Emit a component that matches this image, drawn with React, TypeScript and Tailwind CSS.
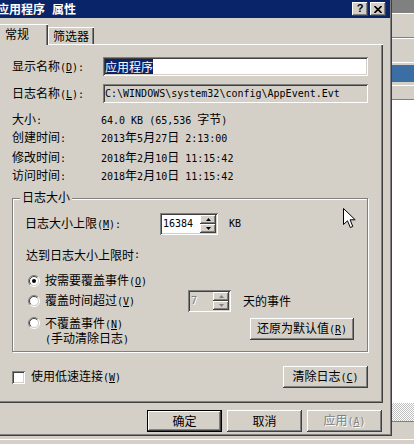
import React from "react";

const mono = "whitespace-pre font-['DejaVu_Sans_Mono',monospace] text-[10px]";
const raised = "bg-[#d4d0c8] shadow-[inset_-1px_-1px_#404040,inset_1px_1px_#ffffff,inset_-2px_-2px_#808080]";
const sunken = "shadow-[inset_1px_1px_#808080,inset_-1px_-1px_#ffffff,inset_2px_2px_#404040,inset_-2px_-2px_#d4d0c8]";

// mixed text: CJK at 12px, ascii in a 6px-wide mono, "&X" = access key
function M({ t }: { t: string }) {
  const out: React.ReactNode[] = [];
  t.split(/(&.)/).forEach((seg, i) => {
    if (!seg) return;
    if (seg[0] === "&" && seg.length === 2) {
      out.push(<span key={i} className={mono + " underline"}>{seg[1]}</span>);
      return;
    }
    seg.split(/([\x20-\x7e]+)/).forEach((p, j) => {
      if (!p) return;
      out.push(
        /[\x20-\x7e]/.test(p[0]) ? (
          <span key={i + "-" + j} className={mono}>{p}</span>
        ) : (
          <span key={i + "-" + j}>{p}</span>
        )
      );
    });
  });
  return <>{out}</>;
}

function Btn({ t, className, def, disabled }: { t: string; className: string; def?: boolean; disabled?: boolean }) {
  const frame = def
    ? "bg-[#d4d0c8] shadow-[inset_0_0_0_1px_#000000,inset_-2px_-2px_#404040,inset_2px_2px_#ffffff,inset_-3px_-3px_#808080]"
    : raised;
  return (
    <div
      className={`flex items-center justify-center ${frame} ${className} ${
        disabled ? "text-[#808080] [text-shadow:1px_1px_#ffffff]" : ""
      }`}
    >
      <span>
        <M t={t} />
      </span>
    </div>
  );
}

function Radio({ checked }: { checked?: boolean }) {
  return (
    <svg width="12" height="12" viewBox="0 0 12 12" className="shrink-0">
      <circle cx="6" cy="6" r="4.5" fill="#ffffff" />
      <path d="M2.1 9.9 A5.5 5.5 0 0 1 9.9 2.1" fill="none" stroke="#808080" />
      <path d="M9.9 2.1 A5.5 5.5 0 0 1 2.1 9.9" fill="none" stroke="#ffffff" />
      <path d="M2.8 9.2 A4.5 4.5 0 0 1 9.2 2.8" fill="none" stroke="#404040" />
      <path d="M9.2 2.8 A4.5 4.5 0 0 1 2.8 9.2" fill="none" stroke="#d4d0c8" />
      {checked && <circle cx="6" cy="6" r="2" fill="#000000" />}
    </svg>
  );
}

function SpinArrows({ disabled }: { disabled?: boolean }) {
  const c = disabled ? "#808080" : "#000000";
  return (
    <div className="flex flex-col w-[16px] shrink-0">
      <div className={`h-[9px] flex items-center justify-center ${raised}`}>
        <svg width="5" height="3" viewBox="0 0 5 3">
          <path d="M2.5 0 L5 3 L0 3 Z" fill={c} />
        </svg>
      </div>
      <div className={`h-[9px] flex items-center justify-center ${raised}`}>
        <svg width="5" height="3" viewBox="0 0 5 3">
          <path d="M0 0 L5 0 L2.5 3 Z" fill={c} />
        </svg>
      </div>
    </div>
  );
}

function Stat({ label, value, className = "" }: { label: string; value: string; className?: string }) {
  return (
    <div className={`flex items-center h-[18px] ${className}`}>
      <div className="w-[89px]">
        <M t={label} />
      </div>
      <div>
        <M t={value} />
      </div>
    </div>
  );
}

function Dialog() {
  return (
    <div className="w-[392px] h-[436px] flex flex-col shadow-[inset_-1px_-1px_#404040,inset_-2px_-2px_#808080]">
      {/* title bar */}
      <div className="h-[18px] w-[390px] bg-[#0a246a] flex items-center">
        <span className="ml-[-3px] text-white font-bold text-[12px] leading-[14px]">应用程序</span>
        <span className="w-[7px]" />
        <span className="text-white font-bold text-[12px] leading-[14px]">属性</span>
        <div className="ml-auto flex gap-[2px] pr-[4px]">
          <div className={`w-[16px] h-[14px] flex items-center justify-center ${raised}`}>
            <span className="font-['Liberation_Sans',sans-serif] font-bold text-[11px] leading-[11px] mt-[-1px]">?</span>
          </div>
          <div className={`w-[16px] h-[14px] flex items-center justify-center ${raised}`}>
            <svg width="8" height="7" viewBox="0 0 8 7">
              <path d="M0.5 0 L7.5 7 M7.5 0 L0.5 7" stroke="#000000" strokeWidth="1.6" />
            </svg>
          </div>
        </div>
      </div>

      {/* tabs */}
      <div className="flex items-end h-[20px] mt-[6px]">
        <div className="relative z-10 w-[48px] h-[21px] mb-[-1px] bg-[#d4d0c8] shadow-[inset_0_1px_#ffffff,inset_-1px_0_#404040,inset_-2px_0_#808080] pl-[5px] pt-[3px]">
          常规
        </div>
        <div className="w-[46px] h-[17px] bg-[#d4d0c8] shadow-[inset_1px_1px_#ffffff,inset_-1px_0_#404040,inset_-2px_0_#808080] flex justify-center pt-[2px]">
          筛选器
        </div>
      </div>

      {/* panel */}
      <div className="w-[383px] h-[359px] shadow-[inset_0_1px_#ffffff,inset_-1px_-1px_#404040,inset_-2px_-2px_#808080] flex flex-col pl-[12px]">
        <div className="flex items-center h-[19px] mt-[13px]">
          <div className="w-[91px]">
            <M t="显示名称(&D):" />
          </div>
          <div className={`w-[265px] h-[19px] bg-white ${sunken} flex items-center pl-[2px]`}>
            <span className="bg-[#0a246a] text-white h-[15px] flex items-center">应用程序</span>
          </div>
        </div>
        <div className="flex items-center h-[19px] mt-[8px]">
          <div className="w-[91px]">
            <M t="日志名称(&L):" />
          </div>
          <div className={`w-[265px] h-[19px] ${sunken} flex items-center pl-[2px]`}>
            <span className={mono}>{"C:\\WINDOWS\\system32\\config\\AppEvent.Evt"}</span>
          </div>
        </div>

        <Stat className="mt-[8px]" label="大小:" value="64.0 KB (65,536 字节)" />
        <Stat label="创建时间:" value="2013年5月27日 2:13:00" />
        <Stat className="mt-[2px]" label="修改时间:" value="2018年2月10日 11:15:42" />
        <Stat label="访问时间:" value="2018年2月10日 11:15:42" />

        {/* group box */}
        <div className="relative mt-[13px] w-[356px] h-[154px] border border-[#808080] shadow-[inset_1px_1px_#ffffff,1px_1px_#ffffff] pl-[12px] pt-[14px] flex flex-col">
          <span className="absolute left-[7px] top-[-9px] px-[2px] bg-[#d4d0c8] leading-[14px]">日志大小</span>
          <svg className="absolute left-[330px] top-[9px]" width="13" height="21" viewBox="0 0 13 21">
            <path d="M0.5 0.5 L0.5 16.5 L4.5 12.8 L7.3 19.5 L9.8 18.5 L7.1 11.8 L12.2 11.8 Z" fill="#ffffff" stroke="#000000" />
          </svg>

          <div className="flex items-center h-[22px]">
            <div className="w-[135px]">
              <M t="日志大小上限(&M):" />
            </div>
            <div className={`w-[58px] h-[22px] bg-white ${sunken} flex p-[2px]`}>
              <div className="flex-1 flex items-center pl-[1px]">
                <span className={mono}>16384</span>
              </div>
              <SpinArrows />
            </div>
            <span className={`ml-[11px] ${mono}`}>KB</span>
          </div>

          <div className="h-[14px] mt-[13px] pl-[1px] flex items-center">
            <M t="达到日志大小上限时:" />
          </div>

          <div className="flex items-center h-[16px] mt-[11px] pl-[3px]">
            <Radio checked />
            <span className="ml-[5px]">
              <M t="按需要覆盖事件(&O)" />
            </span>
          </div>

          <div className="flex items-center h-[22px] mt-[1px] pl-[3px]">
            <div className="w-[160px] flex items-center">
              <Radio />
              <span className="ml-[5px]">
                <M t="覆盖时间超过(&V)" />
              </span>
            </div>
            <div className={`w-[43px] h-[22px] bg-[#d4d0c8] ${sunken} flex p-[2px]`}>
              <div className="flex-1 flex items-center pl-[1px]">
                <span className={`${mono} text-[#808080] [text-shadow:1px_1px_#ffffff]`}>7</span>
              </div>
              <SpinArrows disabled />
            </div>
            <span className="ml-[12px]">天的事件</span>
          </div>

          <div className="flex items-start mt-[4px] pl-[3px]">
            <div className="w-[222px] flex items-start">
              <div className="mt-[1px]">
                <Radio />
              </div>
              <div className="ml-[5px] leading-[13px] flex flex-col">
                <span>
                  <M t="不覆盖事件(&N)" />
                </span>
                <span>
                  <M t="(手动清除日志)" />
                </span>
              </div>
            </div>
            <Btn className="w-[104px] h-[22px] mt-[2px]" t="还原为默认值(&R)" />
          </div>
        </div>

        <div className="flex items-center h-[22px] mt-[14px] w-[356px]">
          <div className={`w-[13px] h-[13px] bg-white ${sunken}`} />
          <span className="ml-[6px]">
            <M t="使用低速连接(&W)" />
          </span>
          <Btn className="ml-auto w-[85px] h-[22px]" t="清除日志(&C)" />
        </div>
      </div>

      {/* dialog buttons */}
      <div className="flex justify-end gap-[5px] w-[390px] pr-[8px] mt-[7px]">
        <Btn def className="w-[75px] h-[22px]" t="确定" />
        <Btn className="w-[75px] h-[22px]" t="取消" />
        <Btn disabled className="w-[75px] h-[22px]" t="应用(&A)" />
      </div>
    </div>
  );
}

function SideStrip() {
  return (
    <div className="w-[22px] h-[436px] flex flex-col">
      <div className="h-[13px] bg-[#808080]" />
      <div className="h-[1px] bg-white" />
      <div className="h-[23px] bg-[#d4d0c8]" />
      <div className="h-[1px] bg-[#808080]" />
      <div className="h-[1px] bg-white" />
      <div className="h-[23px] bg-[#d4d0c8]" />
      <div className="h-[1px] bg-white" />
      <div className="h-[2px] bg-[#d4d0c8]" />
      <div className="h-[17px] bg-[#3a6ea5]" />
      <div className="h-[3px] bg-[#d4d0c8]" />
      <div className="h-[1px] bg-white" />
      <div className="h-[13px] bg-[#d4d0c8]" />
      <div className="h-[1px] bg-[#808080]" />
      <div className="flex-1 bg-white" />
      <div className="h-[18px] bg-[repeating-conic-gradient(#c0c0c0_0_25%,#ffffff_0_50%)] bg-[length:2px_2px]" />
      <div className="h-[1px] bg-[#808080]" />
      <div className="h-[14px] bg-[#d4d0c8]" />
    </div>
  );
}

export default function App() {
  return (
    <div className="w-[414px] h-[444px] overflow-hidden bg-[#d4d0c8] font-['Noto_Sans_CJK_SC',sans-serif] text-[12px] leading-[14px] text-black flex flex-col">
      <div className="flex h-[436px]">
        <Dialog />
        <SideStrip />
      </div>
      <div className="h-[3px]" />
      <div className="h-[1px] bg-white" />
      <div className="flex-1" />
    </div>
  );
}
